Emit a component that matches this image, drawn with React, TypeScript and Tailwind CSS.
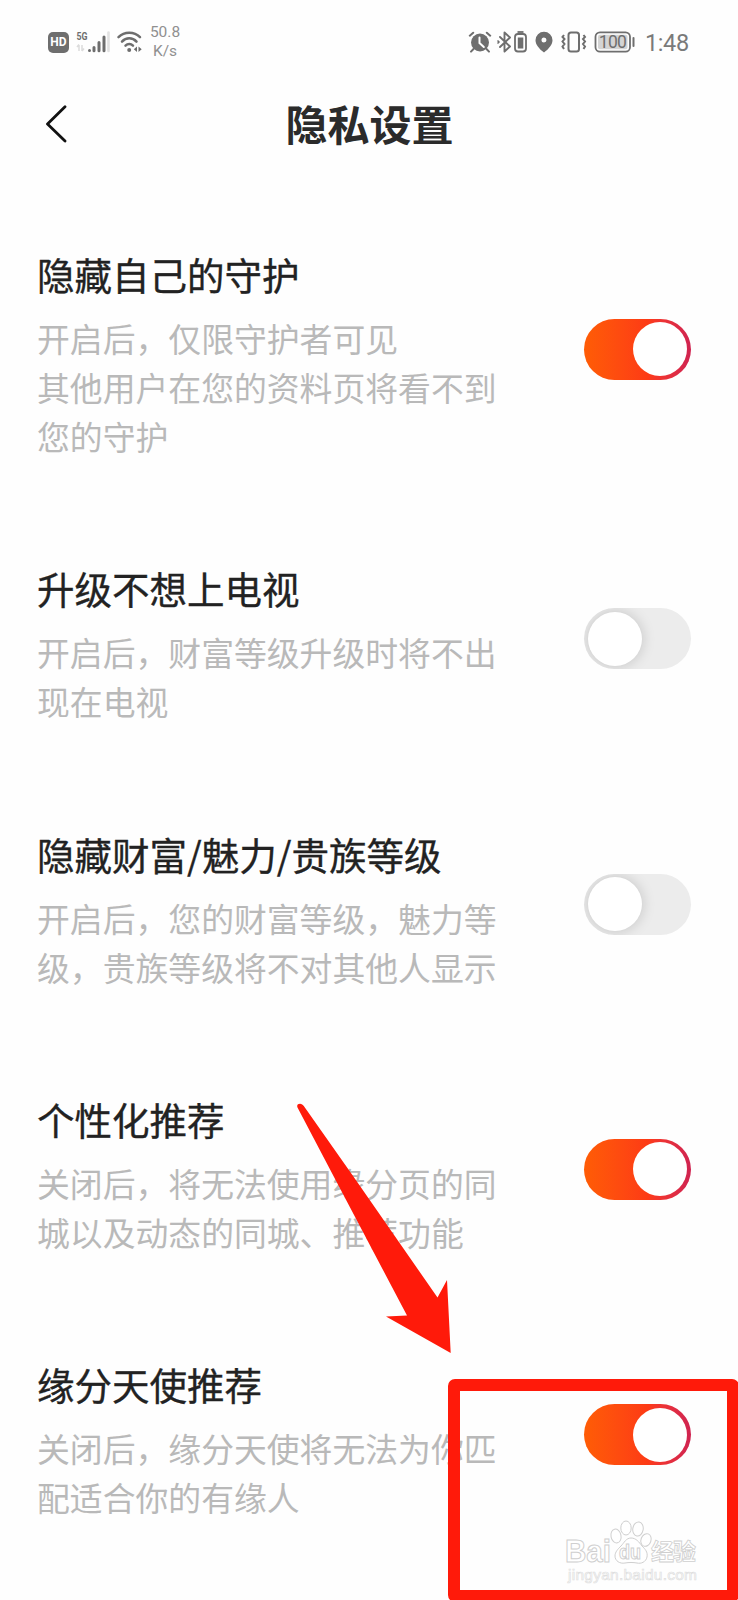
import type { ReactNode } from 'react';

interface Setting {
  title: string;
  desc: string;
  on: boolean;
}

const SETTINGS: Setting[] = [
  { title: '隐藏自己的守护', desc: '开启后，仅限守护者可见\n其他用户在您的资料页将看不到\n您的守护', on: true },
  { title: '升级不想上电视', desc: '开启后，财富等级升级时将不出\n现在电视', on: false },
  { title: '隐藏财富/魅力/贵族等级', desc: '开启后，您的财富等级，魅力等\n级，贵族等级将不对其他人显示', on: false },
  { title: '个性化推荐', desc: '关闭后，将无法使用缘分页的同\n城以及动态的同城、推荐功能', on: true },
  { title: '缘分天使推荐', desc: '关闭后，缘分天使将无法为你匹\n配适合你的有缘人', on: true },
];

export default function App() {
  return (
    <div className="relative h-[1600px] w-[738px] overflow-hidden bg-[#fefefe] font-['Noto_Sans_CJK_SC',sans-serif]">
      <StatusBar />
      <Header title="隐私设置" />
      <main className="mt-[81px] flex flex-col gap-[103.3px] pl-[37px] pr-[47px]">
        {SETTINGS.map((s) => (
          <SettingRow key={s.title} {...s} />
        ))}
      </main>
      <Watermark />
      <Annotations />
    </div>
  );
}

function StatusBar() {
  return (
    <div className="flex h-[84px] items-center pl-12 pr-[49px] text-[#6e6e6e]">
      <HdBadge />
      <Signal />
      <Wifi />
      <div className="ml-[7px] w-[32px] text-center font-['Roboto',sans-serif] text-[15.5px] leading-[19px] text-[#909090]">
        50.8
        <br />
        K/s
      </div>
      <div className="ml-auto flex items-center">
        <Alarm />
        <Bluetooth />
        <Pin />
        <Vibrate />
        <Battery />
        <span className="ml-[9px] w-[44px] whitespace-nowrap pt-px font-['Roboto',sans-serif] text-[23.5px] leading-6 tracking-[-0.4px] text-[#7a7a7a]">
          1:48
        </span>
      </div>
    </div>
  );
}

function Glyph({ w, className = '', children }: { w: number; className?: string; children: ReactNode }) {
  return (
    <svg width={w} height={22} viewBox={`0 0 ${w} 22`} fill="none" className={`shrink-0 ${className}`} aria-hidden="true">
      {children}
    </svg>
  );
}

function HdBadge() {
  return (
    <div className="flex h-[21px] w-[21px] items-center justify-center rounded-[5px] bg-[#6e6e6e] font-['Roboto',sans-serif] text-[12px] font-bold leading-none text-white">
      HD
    </div>
  );
}

function Signal() {
  return (
    <Glyph w={34} className="ml-[7px]">
      <text x="0.5" y="8.5" fontSize="10.5" fontWeight="700" fontFamily="Roboto" textLength="11" lengthAdjust="spacingAndGlyphs" fill="currentColor">
        5G
      </text>
      <path d="M3 14v6M1 16l2-2.500M6 14v6M6 20l2-2.500" stroke="#dcdcdc" strokeWidth="1.500" />
      <path d="M13.500 19.500v0M18 16.500v3.300M23 11.500v8.300M28 6v13.800" stroke="currentColor" strokeWidth="3" strokeLinecap="round" />
      <path d="M32.500 1.500v18.500" stroke="#e2e2e2" strokeWidth="2.600" strokeLinecap="round" />
    </Glyph>
  );
}

function Wifi() {
  return (
    <Glyph w={26} className="ml-[6px]">
      <path d="M2.500 6.200C8.300.2 18.200.2 24 6.200" stroke="currentColor" strokeWidth="2.500" strokeLinecap="round" />
      <path d="M6 10.600c4-4.400 10.500-4.400 14.500 0" stroke="currentColor" strokeWidth="2.500" strokeLinecap="round" />
      <path d="M9.500 14.600c2.200-2.200 5.300-2.200 7.500 0" stroke="currentColor" strokeWidth="2.500" strokeLinecap="round" />
      <circle cx="13.200" cy="19" r="2" fill="currentColor" />
      <path d="M21 15.500v5.500l-3.200-2.700zM22.500 15.500v5.500l3.200-2.700z" fill="currentColor" />
    </Glyph>
  );
}

function Alarm() {
  return (
    <Glyph w={24}>
      <circle cx="12" cy="11.500" r="9" fill="currentColor" />
      <path d="M1.800 4.700 5.200 1.700M22.200 4.700 18.800 1.700M5.500 18l-2.500 2.600M18.500 18l2.500 2.600" stroke="currentColor" strokeWidth="2" strokeLinecap="round" />
      <path d="M11.500 6.500v5.500l4.300 4" stroke="#fff" strokeWidth="2" strokeLinecap="round" />
    </Glyph>
  );
}

function Bluetooth() {
  return (
    <Glyph w={33} className="ml-[4px]">
      <path d="M4 6l10 9.500-5.500 5V1.500l5.500 5L4 16" stroke="currentColor" strokeWidth="1.900" strokeLinejoin="round" strokeLinecap="round" />
      <path d="M1.500 9.500 3 11l-1.500 1.500" stroke="currentColor" strokeWidth="1.500" />
      <path d="M21.500 1h6" stroke="currentColor" strokeWidth="1.800" />
      <rect x="19" y="3" width="11" height="17.500" rx="3" stroke="currentColor" strokeWidth="1.800" />
      <rect x="21.800" y="6.500" width="5.500" height="11" fill="currentColor" />
    </Glyph>
  );
}

function Pin() {
  return (
    <Glyph w={18} className="ml-[6px]">
      <path fillRule="evenodd" d="M9 .7a8.500 8.500 0 0 1 8.500 8.500c0 4.300-3.500 8.500-8.500 12.300C4 17.700.5 13.500.5 9.200A8.500 8.500 0 0 1 9 .7Zm0 5.800a2.500 2.500 0 1 0 0 5 2.500 2.500 0 0 0 0-5Z" fill="currentColor" />
    </Glyph>
  );
}

function Vibrate() {
  return (
    <Glyph w={28} className="ml-[7px]">
      <rect x="8.500" y="1.500" width="10.500" height="19" rx="2.500" stroke="currentColor" strokeWidth="2" />
      <path d="M4 4 2.500 6l2 2-2 2.500 2 2.500-2 2.500L4 18M23.500 4 25 6l-2 2 2 2.500-2 2.500 2 2.500-1.500 2.500" stroke="currentColor" strokeWidth="2" />
    </Glyph>
  );
}

function Battery() {
  return (
    <Glyph w={42} className="ml-[6px]">
      <rect x="1.500" y="1.300" width="34.500" height="19.400" rx="4.500" stroke="currentColor" strokeWidth="1.800" />
      <rect x="4" y="3.800" width="29.500" height="14.400" rx="2" fill="#d4d4d4" />
      <text x="18.800" y="17" fontSize="17.500" fontFamily="Roboto" textAnchor="middle" textLength="28" fill="currentColor">
        100
      </text>
      <path d="M39.500 7v8" stroke="currentColor" strokeWidth="2" strokeLinecap="round" />
    </Glyph>
  );
}

function Header({ title }: { title: string }) {
  return (
    <header className="grid h-[84px] grid-cols-[100px_1fr_100px] items-center">
      <svg width="22" height="38" viewBox="0 0 22 38" fill="none" className="mb-[5px] ml-[45px]" aria-label="返回">
        <path d="M20 1.800 2.500 19 20 36" stroke="#111" strokeWidth="2.800" strokeLinecap="round" strokeLinejoin="round" />
      </svg>
      <h1 className="mb-[6px] ml-px text-center text-[42px] font-bold leading-[60px] text-[#2b2b2b]">{title}</h1>
    </header>
  );
}

function SettingRow({ title, desc, on }: Setting) {
  return (
    <section className="flex items-center justify-between">
      <div>
        <h2 className="text-[37.500px] leading-[49px] text-[#222] [-webkit-text-stroke:0.35px_#222]">{title}</h2>
        <p className="mt-[15px] whitespace-pre text-[32.850px] leading-[49px] text-[#b9b9b9]">{desc}</p>
      </div>
      <Toggle on={on} />
    </section>
  );
}

function Toggle({ on }: { on: boolean }) {
  return (
    <button
      type="button"
      role="switch"
      aria-checked={on}
      className={`mb-[11px] flex h-[61px] w-[107px] shrink-0 items-center overflow-hidden rounded-full px-1 ${
        on ? 'justify-end bg-linear-to-r from-[#ff5c05] via-[#fd3a15] via-60% to-[#cf2350]' : 'justify-start bg-[#ececec]'
      }`}
    >
      <span className={`h-[54px] w-[54px] rounded-full bg-white ${on ? '' : 'shadow-[0_0_14px_rgba(0,0,0,0.18)]'}`} />
    </button>
  );
}

function Watermark() {
  return (
    <svg className="absolute left-[560px] top-[1517px]" width="150" height="72" viewBox="0 0 150 72" fill="#fff" stroke="#cfcfcf" strokeWidth="1">
      <g fontFamily="Liberation Sans, sans-serif" fontWeight="700">
        <text x="5" y="45" fontSize="31" textLength="46" lengthAdjust="spacingAndGlyphs">
          Bai
        </text>
        <ellipse cx="56" cy="19" rx="5" ry="7" transform="rotate(-12 56 19)" />
        <ellipse cx="66" cy="11" rx="5.200" ry="7" />
        <ellipse cx="78" cy="12" rx="5.200" ry="7" transform="rotate(10 78 12)" />
        <ellipse cx="86" cy="23" rx="5" ry="6.500" transform="rotate(20 86 23)" />
        <path d="M71 21c5 0 8 4 11 8 3 3 6 6 5 11s-6 7-10 6c-4-.7-8-.7-12 0-5 1-10-2-10-7 0-4 3-7 6-10s5-8 10-8Z" />
        <text x="59" y="42" fontSize="20" textLength="22" lengthAdjust="spacingAndGlyphs">
          du
        </text>
        <text x="91" y="43" fontSize="23" fontFamily="Noto Sans CJK SC" strokeWidth="0.800" textLength="45">
          经验
        </text>
      </g>
      <text x="8" y="63" fontSize="15.500" fontFamily="Liberation Sans, sans-serif" stroke="#dedede" strokeWidth="0.700" textLength="129">
        jingyan.baidu.com
      </text>
    </svg>
  );
}

// Red arrow and frame pointing at the last switch
function Annotations() {
  return (
    <>
      <svg className="absolute left-[280px] top-[1080px]" width="200" height="290" viewBox="0 0 200 290" aria-hidden="true">
        <path d="M17.500 27.500C16.500 25 18 23.700 20 23.700c1.500 0 3 1 3.800 2.300L72 94.500 157.500 217.500 167 200l3.700 73L106 236.500l21-1L54 97Z" fill="#ff1a0a" />
      </svg>
      <div className="absolute left-[448px] top-[1379px] h-[223px] w-[291px] rounded-[7px] border-[12px] border-[#ff1a0a]" />
    </>
  );
}
